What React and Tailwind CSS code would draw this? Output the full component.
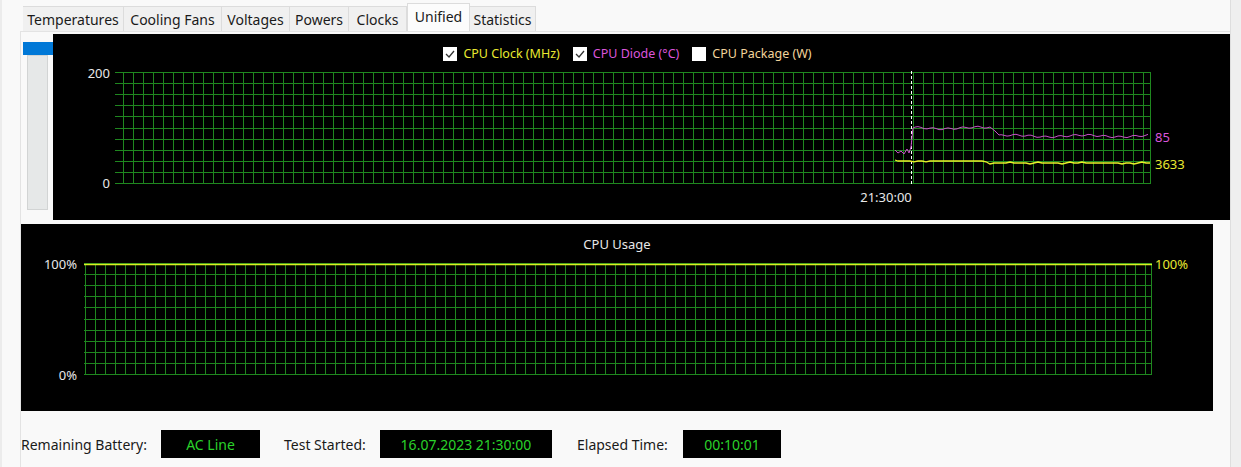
import React from 'react';

const UI = { fontFamily: '"Noto Sans", "Open Sans", Arial, sans-serif' };

const tabs = ['Temperatures', 'Cooling Fans', 'Voltages', 'Powers', 'Clocks', 'Unified', 'Statistics'];
const tabWidths = [101, 98, 68, 59, 58, 63, 66];

const noise = (i, s) => Math.sin(i * 12.9898 + s * 78.233) * 0.5 + Math.sin(i * 4.1 + s) * 0.5;

// CPU Diode trace, chart coordinates
function magentaPoints() {
  const pts = [[842, 87], [845, 90], [848, 88], [851, 91], [854, 86], [856, 90], [858, 84], [860, 65]];
  for (let x = 862; x <= 938; x += 3) pts.push([x, 65 + noise(x, 1) * 1.8]);
  pts.push([942, 68], [946, 72]);
  const spikes = { 964: 68, 1009: 66, 1015: 70, 1057: 69, 1081: 70, 1093: 68 };
  for (let x = 948; x <= 1097; x += 3) pts.push([x, spikes[x] || 73 + noise(x, 2) * 1.8]);
  return pts.map(([x, y]) => `${x},${y.toFixed(1)}`).join(' ');
}

// CPU Clock trace
function yellowPoints() {
  const pts = [[842, 97]];
  for (let x = 845; x <= 934; x += 4) pts.push([x, 98 + (noise(x, 3) > 0.8 ? 0.8 : 0)]);
  for (let x = 937; x <= 1097; x += 4) pts.push([x, 100 + (noise(x, 4) > 0.6 ? -1 : noise(x, 5) > 0.7 ? 1 : 0)]);
  return pts.map(([x, y]) => `${x},${y}`).join(' ');
}

function Grid({ x0, x1, y0, y1, firstV, step = 10 }) {
  const rows = [];
  const dy = (y1 - y0) / 10;
  for (let i = 0; i <= 10; i++) rows.push(y0 + dy * i);
  const cols = [];
  for (let x = firstV; x < x1 - 2; x += step) cols.push(x);
  return (
    <g stroke="#1f871f" strokeWidth="1" shapeRendering="crispEdges">
      {rows.map((y, i) => (
        <line key={'h' + i} x1={x0} x2={x1} y1={y.toFixed(0) - 0.5} y2={y.toFixed(0) - 0.5} />
      ))}
      {cols.map((x, i) => (
        <line key={'v' + i} x1={x + 0.5} x2={x + 0.5} y1={y0} y2={y1} />
      ))}
      <line x1={x1 - 0.5} x2={x1 - 0.5} y1={y0} y2={y1} />
    </g>
  );
}

function Check({ checked }) {
  return (
    <span className="w-[14px] h-[14px] bg-white flex items-center justify-center">
      {checked && (
        <svg width="12" height="12" viewBox="0 0 12 12">
          <polyline points="2,6 5,9 10,3" fill="none" stroke="#333" strokeWidth="1.3" />
        </svg>
      )}
    </span>
  );
}

function LegendItem({ checked, color, label }) {
  return (
    <div className="flex items-center gap-[6px]">
      <Check checked={checked} />
      <span className="text-[12.5px]" style={{ color }}>{label}</span>
    </div>
  );
}

function TopChart() {
  return (
    <div className="flex-1 h-[186px] bg-black flex flex-col">
      <div className="h-[29px] pt-[11px] flex justify-center items-center gap-[13px] pr-[28px]">
        <LegendItem checked color="#e9e930" label="CPU Clock (MHz)" />
        <LegendItem checked color="#db55db" label="CPU Diode (°C)" />
        <LegendItem color="#f2d49b" label="CPU Package (W)" />
      </div>
      <svg width="1160" height="157" className="block" style={UI}>
        <Grid x0={62} x1={1098} y0={10} y1={121} firstV={70} />
        <text x="57" y="14.5" textAnchor="end" fill="#e8e8e8" fontSize="13">200</text>
        <text x="57" y="124.5" textAnchor="end" fill="#e8e8e8" fontSize="13">0</text>
        <line x1="858.5" x2="858.5" y1="8" y2="121" stroke="#fff" strokeDasharray="3 2" />
        <text x="833" y="138.5" textAnchor="middle" fill="#e8e8e8" fontSize="13">21:30:00</text>
        <polyline points={magentaPoints()} fill="none" stroke="#c850c8" strokeWidth="1" />
        <polyline points={yellowPoints()} fill="none" stroke="#eaf02a" strokeWidth="1.3" />
        <text x="1102" y="78.5" fill="#db55db" fontSize="13">85</text>
        <text x="1102" y="105.5" fill="#e9e930" fontSize="13">3633</text>
      </svg>
    </div>
  );
}

function UsageChart() {
  return (
    <div className="w-[1192px] h-[187px] bg-black flex flex-col">
      <div className="h-[30px] pt-[12px] flex justify-center items-center text-[13px] text-[#e8e8e8]">CPU Usage</div>
      <svg width="1192" height="157" className="block" style={UI}>
        <Grid x0={63} x1={1131} y0={10} y1={121} firstV={64} />
        <line x1="63" x2="1131" y1="10.5" y2="10.5" stroke="#d8f020" strokeWidth="1.5" />
        <text x="56" y="14.5" textAnchor="end" fill="#e8e8e8" fontSize="13">100%</text>
        <text x="56" y="125.5" textAnchor="end" fill="#e8e8e8" fontSize="13">0%</text>
        <text x="1134" y="14.5" fill="#e9e930" fontSize="13">100%</text>
      </svg>
    </div>
  );
}

function Field({ label, value, labelW, boxW, ml }) {
  return (
    <div className={`flex items-center ${ml}`}>
      <span className={`${labelW} text-[14px] text-[#1a1a1a]`}>{label}</span>
      <span className={`${boxW} h-[28px] bg-black text-[#2ad12a] text-[14px] flex items-center justify-center`}>{value}</span>
    </div>
  );
}

export default function App() {
  return (
    <div className="w-[1241px] h-[467px] bg-[#f9f9f9] flex overflow-hidden" style={UI}>
      <div className="w-[20px] border-l-2 border-[#ececec]" />
      <div className="w-[1210px] flex flex-col">
        <div className="h-[31px] flex items-end pl-[3px]">
          {tabs.map((t, i) => {
            const sel = t === 'Unified';
            return (
              <div
                key={t}
                className={
                  sel
                    ? 'h-[28px] bg-[#fcfcfc] border border-b-0 border-[#dcdcdc] flex items-center justify-center text-[14px] text-[#1a1a1a] pb-[3px]'
                    : 'h-[25px] bg-[#f0f0f0] border-t border-r border-[#dcdcdc] flex items-center justify-center text-[14px] text-[#1a1a1a]'
                }
                style={{ width: tabWidths[i] }}
              >
                {t}
              </div>
            );
          })}
        </div>
        <div className="flex-1 border-t border-l border-[#e3e3e3] flex flex-col pt-[2px]">
          <div className="flex">
            <div className="w-[32px] flex flex-col items-center pt-[8px]">
              <div className="w-[30px] h-[13px] bg-[#0078d7] ml-[1px]" />
              <div className="w-[21px] h-[155px] bg-[#e6e8e8] border border-[#d2d4d4]" />
            </div>
            <TopChart />
          </div>
          <div className="mt-[4px]">
            <UsageChart />
          </div>
          <div className="flex mt-[19px]">
            <Field label="Remaining Battery:" value="AC Line" labelW="w-[140px]" boxW="w-[99px]" ml="" />
            <Field label="Test Started:" value="16.07.2023 21:30:00" labelW="w-[96px]" boxW="w-[172px]" ml="ml-[24px]" />
            <Field label="Elapsed Time:" value="00:10:01" labelW="w-[106px]" boxW="w-[98px]" ml="ml-[25px]" />
          </div>
        </div>
      </div>
      <div className="flex-1 border-l border-[#dedede] bg-[#efefef]" />
    </div>
  );
}
